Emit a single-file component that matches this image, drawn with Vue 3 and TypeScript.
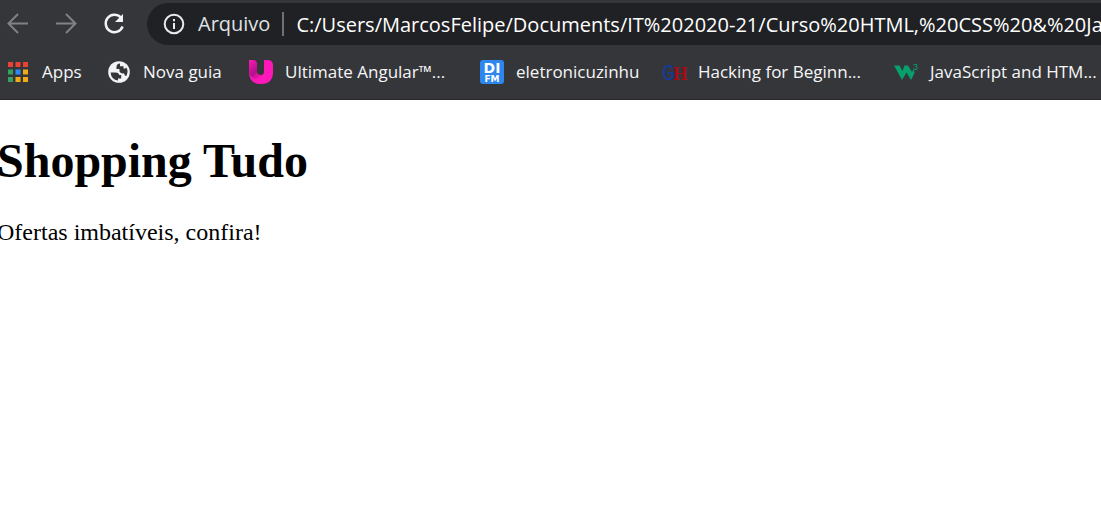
<script setup lang="ts">
import { ref } from 'vue'

interface Bookmark {
  icon: 'apps' | 'globe' | 'angular' | 'difm' | 'hacking' | 'w3'
  label: string
}

const address = ref('C:/Users/MarcosFelipe/Documents/IT%202020-21/Curso%20HTML,%20CSS%20&%20JavaScript')

const appColors = [
  ['#ea4335', '#ea4335', '#ea4335'],
  ['#34a160', '#2b8af5', '#f2ab18'],
  ['#34a160', '#f2ab18', '#f2ab18'],
]

const bookmarks: Bookmark[] = [
  { icon: 'apps', label: 'Apps' },
  { icon: 'globe', label: 'Nova guia' },
  { icon: 'angular', label: 'Ultimate Angular™...' },
  { icon: 'difm', label: 'eletronicuzinhu' },
  { icon: 'hacking', label: 'Hacking for Beginn...' },
  { icon: 'w3', label: 'JavaScript and HTM...' },
]
</script>

<template>
  <div class="browser">
    <header class="chrome">
      <div class="toolbar">
        <nav class="history" aria-label="Navegação">
          <button type="button" class="tool" aria-label="Voltar" disabled>
            <svg viewBox="0 0 24 24"><path d="M22 11.500H3M12 2L2.500 11.500L12 21" /></svg>
          </button>
          <button type="button" class="tool" aria-label="Avançar" disabled>
            <svg viewBox="0 0 24 24"><path d="M2 11.500H21M12 2L21.500 11.500L12 21" /></svg>
          </button>
          <button type="button" class="tool reload" aria-label="Recarregar">
            <svg viewBox="0 0 24 24">
              <path d="M18.800 5.500A8.700 8.700 0 1 0 20.600 14.500" />
              <path class="solid" d="M21 2V10H13Z" />
            </svg>
          </button>
        </nav>
        <div class="omnibox">
          <button type="button" class="origin">
            <svg viewBox="0 0 22 22">
              <circle cx="11" cy="11" r="9.300" />
              <path d="M11 10V16M11 6V8.200" />
            </svg>
            <span>Arquivo</span>
          </button>
          <span class="divider"></span>
          <input v-model="address" class="address" type="text" aria-label="Endereço" spellcheck="false" />
        </div>
      </div>
      <nav class="bookmarks" aria-label="Favoritos">
        <a v-for="item in bookmarks" :key="item.label" class="bookmark" href="#">
          <svg v-if="item.icon === 'apps'" viewBox="0 0 24 24">
            <template v-for="(row, y) in appColors" :key="y">
              <rect v-for="(color, x) in row" :key="x" :x="2 + x * 7.5" :y="2 + y * 7.5" width="5" height="5" :fill="color" />
            </template>
          </svg>
          <svg v-else-if="item.icon === 'globe'" viewBox="0 0 24 24">
            <circle cx="12" cy="12" r="10.800" fill="#f1f3f4" />
            <path d="M3.600 12.400H8.500Q12 12.500 12.200 15H14.200V18.400H11V20.600Q4.200 19.400 3.600 12.400Z" fill="#35363a" />
            <path d="M13 3.600Q9.500 4 9.500 7V9H12.500V11.500Q14 14 17 13.200L18 15.800H19.500Q21.700 11 19.300 7.500Q18.200 9.300 16.500 8.300V6.200H13Z" fill="#35363a" />
          </svg>
          <svg v-else-if="item.icon === 'angular'" viewBox="0 0 24 24">
            <defs>
              <linearGradient id="u-shade" x1="0" y1="0" x2="0.6" y2="1">
                <stop offset="0" stop-color="#ff18b5" />
                <stop offset=".65" stop-color="#b5108b" />
                <stop offset="1" stop-color="#f415b0" />
              </linearGradient>
            </defs>
            <path d="M0 0H3Q8 0 8 5V12Q8 15 11.500 15Q15 15 15 12V0H18Q24 0 24 5V12Q24 24 12 24Q0 24 0 12Z" fill="#ff18b9" />
            <path d="M0 0H3Q8 0 8 5V12Q8 15 11.500 15Q15 15 14 16Q9 21 4 18Q0 16 0 10Z" fill="url(#u-shade)" />
          </svg>
          <svg v-else-if="item.icon === 'difm'" viewBox="0 0 24 24">
            <rect width="24" height="24" rx="3" fill="#2d87ee" />
            <text x="12" y="13" class="logo-top" text-anchor="middle">DI</text>
            <text x="12" y="22" class="logo-bottom" text-anchor="middle">FM</text>
          </svg>
          <svg v-else-if="item.icon === 'hacking'" viewBox="0 0 24 24">
            <text x="0" y="20" class="logo-g">G</text>
            <text x="11" y="20" class="logo-h">H</text>
          </svg>
          <svg v-else viewBox="0 0 24 24">
            <path d="M0 5.500H5.500L8.500 11L10.500 5.500H14L18 12L20 9L20.500 13L17 20L12.500 12.500L8 20Z" fill="#05a06b" />
            <text x="19" y="10" class="logo-three">3</text>
          </svg>
          <span>{{ item.label }}</span>
        </a>
      </nav>
    </header>
    <main class="page">
      <h1>Shopping Tudo</h1>
      <p>Ofertas imbatíveis, confira!</p>
    </main>
  </div>
</template>

<style>
body {
  margin: 0;
  background: #fff;
}
</style>

<style scoped>
.browser {
  overflow: hidden;
}

.chrome {
  box-sizing: border-box;
  background: #35363a;
  border-bottom: 1px solid #292729;
  padding: 3px 0 15px;
  color: #f5f6f7;
  font-family: "Segoe UI", "Open Sans", "Noto Sans", sans-serif;
}

.toolbar {
  display: flex;
  align-items: center;
}

.history {
  display: flex;
  gap: 24px;
  padding: 0 21px 0 6px;
}

.tool {
  width: 24px;
  height: 24px;
  padding: 0;
  border: 0;
  background: none;
}

.tool svg {
  display: block;
  width: 24px;
  height: 24px;
  fill: none;
  stroke: #808185;
  stroke-width: 2;
}

.tool.reload svg {
  stroke: #f1f3f4;
  stroke-width: 2.5;
}

.tool.reload .solid {
  fill: #f1f3f4;
  stroke: none;
}

.omnibox {
  flex: 1;
  min-width: 0;
  display: flex;
  align-items: center;
  height: 42px;
  padding-left: 16px;
  border-radius: 21px 0 0 21px;
  background: #202124;
}

.origin {
  display: flex;
  align-items: center;
  gap: 13px;
  padding: 0;
  border: 0;
  background: none;
  color: #dfe1e5;
  font-family: inherit;
  font-size: 20px;
  line-height: 28px;
}

.origin svg {
  width: 22px;
  height: 22px;
  fill: none;
  stroke: #e8eaed;
  stroke-width: 2;
}

.divider {
  width: 2px;
  height: 24px;
  margin: 0 12px;
  background: #6f7174;
}

.address {
  flex: 1;
  min-width: 0;
  height: 42px;
  padding: 0;
  border: 0;
  outline: 0;
  background: none;
  color: #fff;
  font-family: inherit;
  font-size: 20px;
}

.bookmarks {
  display: grid;
  grid-template-columns: 101px 142px 231px 182px 232px 1fr;
  padding: 15px 0 0 6px;
}

.bookmark {
  display: flex;
  align-items: center;
  gap: 12px;
  color: inherit;
  font-size: 17px;
  line-height: 24px;
  white-space: nowrap;
  text-decoration: none;
}

.bookmark svg {
  flex: none;
  width: 24px;
  height: 24px;
  overflow: visible;
}

.logo-top {
  fill: #fff;
  font: bold 14px "DejaVu Sans", sans-serif;
}

.logo-bottom {
  fill: #fff;
  font: bold 9px "DejaVu Sans", sans-serif;
}

.logo-g {
  fill: #113b9c;
  font: 22px "Liberation Mono", monospace;
}

.logo-h {
  fill: #a70c16;
  font: bold 19px "Liberation Serif", serif;
}

.logo-three {
  fill: #05a06b;
  font: 9px "Liberation Sans", sans-serif;
}

.page {
  margin-left: -3px;
  padding-top: 33px;
  color: #000;
  font-family: "Liberation Serif", "Times New Roman", serif;
}

h1 {
  margin: 0 0 29px;
  font-size: 48px;
  line-height: 56px;
}

p {
  margin: 0;
  font-size: 24px;
  line-height: 28px;
}
</style>
